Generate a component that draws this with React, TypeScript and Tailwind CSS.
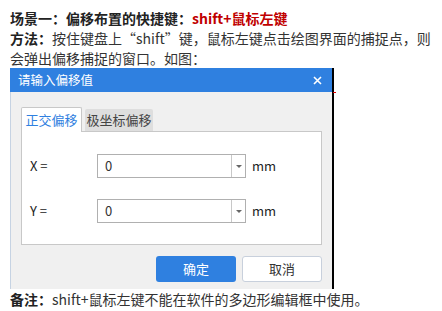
const font = { fontFamily: '"Microsoft YaHei", "Noto Sans CJK SC", "Noto Sans", sans-serif' };

function ValueRow({ label }: { label: string }) {
  return (
    <div className="flex items-center h-[24px]">
      <span className="w-[75px] pl-[8px] text-[13px] text-[#222]">{label}</span>
      <div className="flex h-[24px] w-[149px] border border-[#b0b0b0] bg-white">
        <span className="flex-1 pl-[7px] text-[13px] leading-[22px] text-[#333]">0</span>
        <span className="flex w-[14px] items-center justify-center border-l border-[#c8c8c8]">
          <span className="block h-0 w-0 border-x-[3px] border-t-[3px] border-x-transparent border-t-[#666]" />
        </span>
      </div>
      <span className="ml-[6px] text-[13px] text-[#222]">mm</span>
    </div>
  );
}

export default function App() {
  return (
    <div className="w-[442px] h-[311px] bg-white overflow-hidden" style={font}>
      {/* Intro text */}
      <div className="px-[10px] pt-[8px] text-[14px] leading-[20px] text-[#333]">
        <p>
          <b className="text-[#222]">场景一：偏移布置的快捷键：</b>
          <b className="text-[#c00000]">shift+鼠标左键</b>
        </p>
        <p>
          <b className="text-[#222]">方法：</b>
          <span>按住键盘上“shift”键，鼠标左键点击绘图界面的捕捉点，则</span>
          <br />
          <span>会弹出偏移捕捉的窗口。如图：</span>
        </p>
      </div>

      {/* Dialog screenshot */}
      <div className="relative ml-[10px] w-[324px] border-r-2 border-black">
        <div className="flex h-[24px] items-center justify-between bg-[#2f80e0] pl-[8px] pr-[10px]">
          <span className="text-[12.5px] text-white">请输入偏移值</span>
          <svg width="9" height="9" viewBox="0 0 9 9">
            <path d="M1 1L8 8M8 1L1 8" stroke="white" strokeWidth="1.6" />
          </svg>
        </div>
        <div className="h-[197px] border-l border-[#c6d3e3] bg-[#f0f0f0] pl-[10px] pr-[10px] pt-[15px]">
          {/* Tabs */}
          <div className="flex items-end gap-[3px]">
            <div className="relative z-10 -mb-px flex h-[25px] w-[61px] items-center justify-center rounded-t-[2px] border border-b-0 border-[#c8c8c8] bg-white text-[13px] text-[#2f80e0]">
              正交偏移
            </div>
            <div className="flex h-[22px] w-[68px] items-center justify-center rounded-t-[2px] bg-[#dedede] text-[13px] text-[#444]">
              极坐标偏移
            </div>
          </div>
          <div className="flex h-[114px] w-[301px] flex-col gap-[21px] border border-[#c8c8c8] bg-white pt-[22px]">
            <ValueRow label="X =" />
            <ValueRow label="Y =" />
          </div>
          {/* Buttons */}
          <div className="mt-[11px] flex w-[301px] justify-end gap-[6px]">
            <button className="h-[26px] w-[80px] rounded-[3px] bg-[#2f80e0] text-[13px] text-white">确定</button>
            <button className="h-[26px] w-[80px] rounded-[3px] border border-[#c8d0dc] bg-white text-[13px] text-[#333]">取消</button>
          </div>
        </div>
        <span className="absolute right-[-4px] top-[24px] h-px w-[3px] bg-[#e00000]" />
      </div>

      <p className="px-[10px] text-[14px] leading-[20px] text-[#333]">
        <b className="text-[#222]">备注：</b>shift+鼠标左键不能在软件的多边形编辑框中使用。
      </p>
    </div>
  );
}
